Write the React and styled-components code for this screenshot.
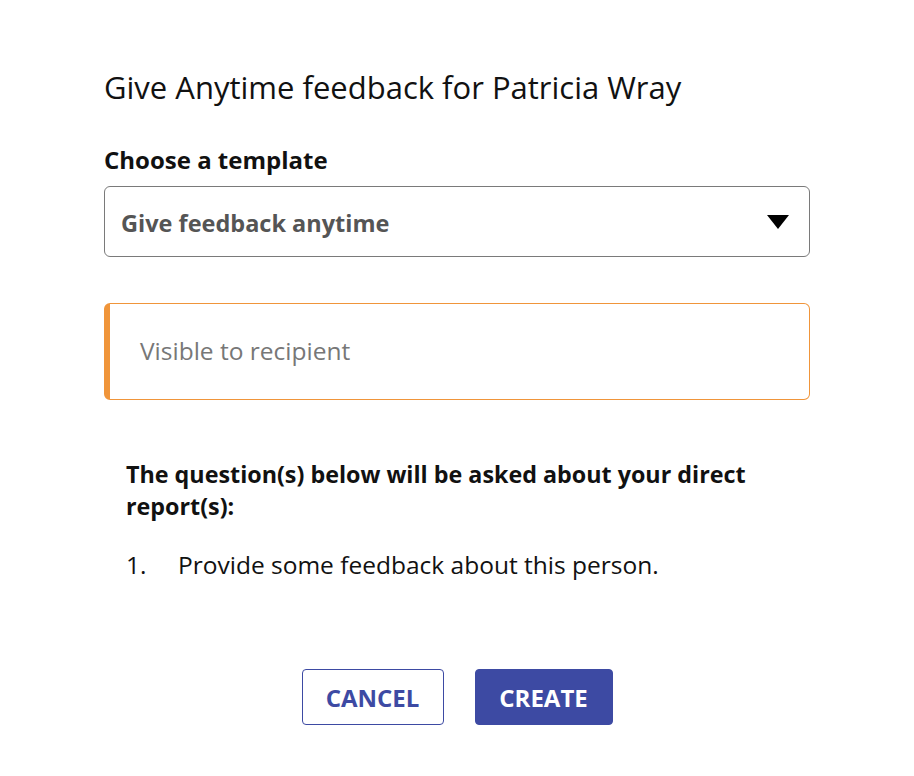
import React, { useState } from 'react';
import styled, { createGlobalStyle } from 'styled-components';

const GlobalStyle = createGlobalStyle`
  html, body {
    margin: 0;
    padding: 0;
    background: #fff;
  }
  body {
    font-family: "Open Sans", "Noto Sans", "Liberation Sans", sans-serif;
    color: #111;
  }
`;

const Page = styled.div`
  width: 914px;
  min-height: 776px;
  box-sizing: border-box;
  padding: 67px 0 0;
  display: flex;
  flex-direction: column;
  align-items: center;
`;

const Dialog = styled.div`
  width: 706px;
  display: flex;
  flex-direction: column;
`;

const Title = styled.h2`
  margin: 0;
  font-size: 31px;
  font-weight: 400;
  line-height: 40px;
  color: #111;
`;

const Label = styled.div`
  margin-top: 39px;
  font-size: 24px;
  font-weight: 700;
  line-height: 28px;
`;

const Select = styled.div`
  margin-top: 12px;
  height: 71px;
  box-sizing: border-box;
  border: 1px solid #7a7a7a;
  border-radius: 6px;
  padding: 3px 20px 0 16px;
  display: flex;
  align-items: center;
  justify-content: space-between;
  font-size: 23.5px;
  font-weight: 700;
  color: #555;
  cursor: pointer;
`;

const Caret = styled.span`
  width: 0;
  height: 0;
  margin-top: -3px;
  border-left: 11px solid transparent;
  border-right: 11px solid transparent;
  border-top: 14px solid #000;
`;

const Note = styled.textarea`
  margin-top: 46px;
  height: 97px;
  box-sizing: border-box;
  border: 1px solid #f0953a;
  border-left: 6px solid #f0953a;
  border-radius: 6px;
  padding: 33px 30px 0;
  font-family: inherit;
  font-size: 24.5px;
  line-height: 28px;
  color: #333;
  resize: none;
  outline: none;

  &::placeholder {
    color: #777;
  }
`;

const Questions = styled.div`
  margin-top: 58px;
  padding: 0 22px;
`;

const Intro = styled.p`
  margin: 0;
  font-size: 23.3px;
  font-weight: 700;
  line-height: 32px;
`;

const List = styled.ol`
  margin: 29px 0 0;
  padding: 0;
  list-style: none;
`;

const Item = styled.li`
  display: flex;
  font-size: 24.5px;
  line-height: 28px;
`;

const Num = styled.span`
  width: 52px;
  flex-shrink: 0;
`;

const Actions = styled.div`
  margin-top: 90px;
  display: flex;
  justify-content: center;
  gap: 31px;
`;

const Button = styled.button`
  width: ${({ $primary }) => ($primary ? '138px' : '142px')};
  height: 56px;
  padding: 0;
  box-sizing: border-box;
  border: 1px solid #3d4aa3;
  border-radius: 4px;
  background: ${({ $primary }) => ($primary ? '#3d4aa3' : '#fff')};
  color: ${({ $primary }) => ($primary ? '#fff' : '#3d4aa3')};
  font-family: inherit;
  font-size: 24px;
  font-weight: 700;
  text-transform: uppercase;
  cursor: pointer;
`;

const questions = ['Provide some feedback about this person.'];

export default function App() {
  const [note, setNote] = useState('');

  return (
    <>
      <GlobalStyle />
      <Page>
        <Dialog>
          <Title>Give Anytime feedback for Patricia Wray</Title>
          <Label>Choose a template</Label>
          <Select>
            <span>Give feedback anytime</span>
            <Caret />
          </Select>
          <Note
            placeholder="Visible to recipient"
            value={note}
            onChange={(e) => setNote(e.target.value)}
          />
          <Questions>
            <Intro>The question(s) below will be asked about your direct report(s):</Intro>
            <List>
              {questions.map((q, i) => (
                <Item key={q}>
                  <Num>{i + 1}.</Num>
                  <span>{q}</span>
                </Item>
              ))}
            </List>
          </Questions>
          <Actions>
            <Button>Cancel</Button>
            <Button $primary>Create</Button>
          </Actions>
        </Dialog>
      </Page>
    </>
  );
}
